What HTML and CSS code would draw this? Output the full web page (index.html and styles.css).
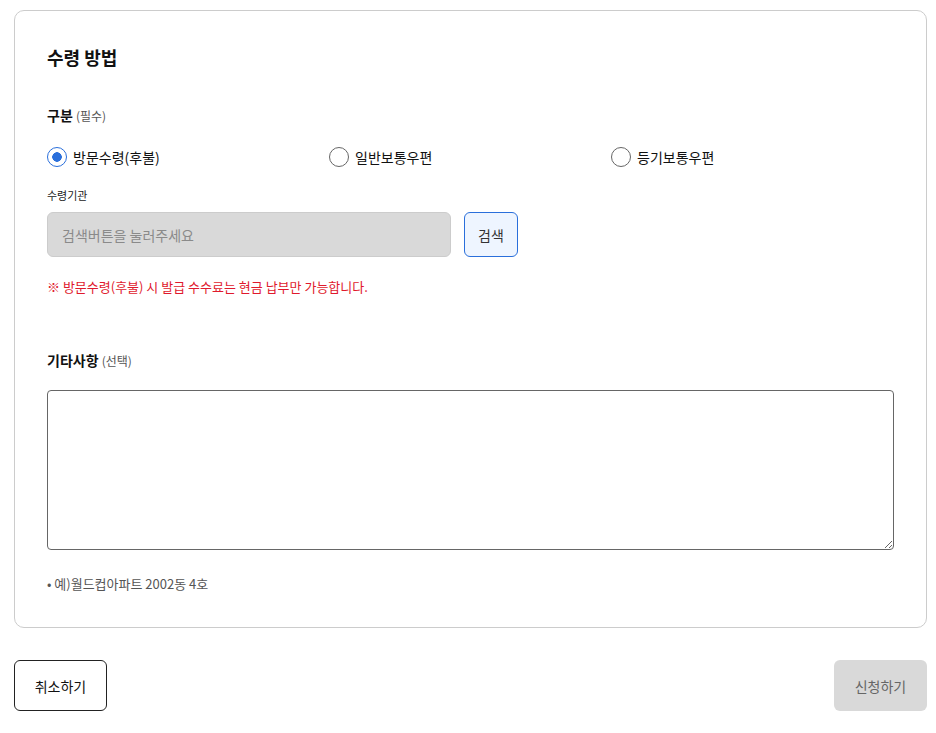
FILE: index.html
```html
<!DOCTYPE html>
<html>
	<head>
		<meta charset="utf-8">
		<title>수령 방법</title>
		<link rel="stylesheet" href="styles.css">
	</head>
	<body>
		<div class='page'>
			<div class='card'>
				<h2 class='title'>수령 방법</h2>

				<div class='label'>구분 <span class='sub'>(필수)</span></div>
				<div class='radios'>
					<label class='radio'><input type='radio' name='kind' checked><span>방문수령(후불)</span></label>
					<label class='radio'><input type='radio' name='kind'><span>일반보통우편</span></label>
					<label class='radio'><input type='radio' name='kind'><span>등기보통우편</span></label>
				</div>

				<div class='small'>수령기관</div>
				<div class='search'>
					<input class='sInput' type='text' placeholder='검색버튼을 눌러주세요' disabled>
					<button class='sBtn' type='button'>검색</button>
				</div>
				<p class='warn'>※ 방문수령(후불) 시 발급 수수료는 현금 납부만 가능합니다.</p>

				<div class='label etc'>기타사항 <span class='sub'>(선택)</span></div>
				<textarea class='memo'></textarea>
				<p class='hint'>• 예)월드컵아파트 2002동 4호</p>
			</div>

			<div class='actions'>
				<button class='cancel' type='button'>취소하기</button>
				<button class='submit' type='button'>신청하기</button>
			</div>
		</div>
	</body>
</html>
```

FILE: styles.css
```css
body{
	margin:0;
	font-family:"Noto Sans CJK KR","Noto Sans",sans-serif;
	color:#111;
	background:#fff;
}
.page{
	padding:10px 9px 0 14px;
}
.card{
	border:1px solid #ccc;
	border-radius:10px;
	padding:32px 32px 33px 32px;
}
.title{
	margin:0;
	font-size:18px;
	font-weight:700;
	line-height:28px;
}
.label{
	margin-top:33px;
	font-size:14px;
	font-weight:700;
	line-height:22px;
}
.label .sub{
	font-size:12px;
	font-weight:400;
	color:#555;
}
.radios{
	display:grid;
	grid-template-columns:282px 282px 1fr;
	margin-top:19px;
}
.radio{
	display:flex;
	align-items:center;
	gap:6px;
	font-size:14px;
	line-height:22px;
}
.radio input{
	appearance:none;
	width:20px;
	height:20px;
	margin:0;
	border:1px solid #666;
	border-radius:50%;
	background:#fff;
}
.radio input:checked{
	border:1.5px solid #2a6fdb;
	background:radial-gradient(circle,#2a6fdb 0 4.5px,#fff 5px);
}
.small{
	margin-top:19px;
	font-size:11px;
	line-height:16px;
	color:#222;
}
.search{
	display:flex;
	gap:13px;
	margin-top:9px;
}
.sInput{
	width:404px;
	height:45px;
	box-sizing:border-box;
	border:1px solid #ccc;
	border-radius:6px;
	background:#d9d9d9;
	padding:0 14px;
	font-family:inherit;
	font-size:14px;
}
.sInput::placeholder{
	color:#8a8a8a;
}
.sBtn{
	width:54px;
	height:45px;
	border:1px solid #2a6fdb;
	border-radius:6px;
	background:#eef5ff;
	color:#333;
	font-family:inherit;
	font-size:14px;
	padding:0;
}
.warn{
	margin:20px 0 0;
	font-size:13px;
	line-height:20px;
	color:#e0192d;
}
.label.etc{
	margin-top:52px;
}
.memo{
	display:block;
	width:100%;
	height:160px;
	box-sizing:border-box;
	margin-top:18px;
	border:1px solid #666;
	border-radius:4px;
	font-family:inherit;
}
.hint{
	margin:24px 0 0;
	font-size:13px;
	line-height:20px;
	color:#555;
}
.actions{
	display:flex;
	justify-content:space-between;
	margin-top:32px;
}
.actions button{
	width:93px;
	height:51px;
	border-radius:6px;
	font-family:inherit;
	font-size:14px;
}
.cancel{
	border:1px solid #222;
	background:#fff;
	color:#111;
}
.submit{
	border:none;
	background:#d9d9d9;
	color:#666;
}
```
